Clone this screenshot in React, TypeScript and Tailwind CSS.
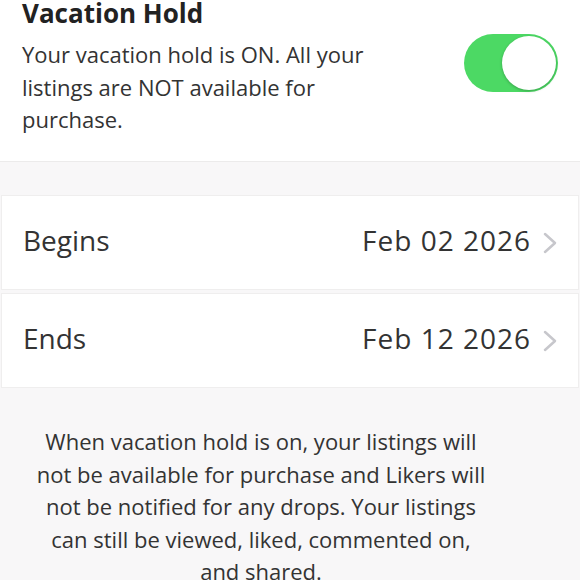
export default function App() {
  const font = { fontFamily: '"Open Sans", "Noto Sans", sans-serif' };
  return (
    <div className="w-[580px] h-[580px] overflow-hidden bg-[#f8f7f8] text-[#333333]" style={font}>
      <div className="bg-white border-b border-[#ecebeb] h-[162px] px-[22px] flex flex-col">
        <h1 className="text-[26px] leading-[32px] font-bold text-[#222222] -mt-[3px]">Vacation Hold</h1>
        <div className="flex justify-between items-start mt-[9px]">
          <p className="text-[22px] leading-[32.5px] w-[380px]">
            Your vacation hold is ON. All your listings are NOT available for purchase.
          </p>
          <div className="-mt-[4px] w-[94px] h-[58px] rounded-full bg-[#4cd964] p-[2px] flex justify-end">
            <div className="w-[54px] h-[54px] rounded-full bg-white shadow-[0_1px_3px_rgba(0,0,0,0.25)]" />
          </div>
        </div>
      </div>
      <div className="h-[33px]" />
      <div className="mx-[1px] flex flex-col gap-[3px]">
        <DateRow label="Begins" value="Feb 02 2026" />
        <DateRow label="Ends" value="Feb 12 2026" />
      </div>
      <p className="text-center text-[22px] leading-[32.5px] w-[462px] ml-[30px] mt-[37px]">
        When vacation hold is on, your listings will not be available for purchase and Likers will not be notified for any drops. Your listings can still be viewed, liked, commented on, and shared.
      </p>
    </div>
  );
}

function DateRow({ label, value }: { label: string; value: string }) {
  return (
    <div className="bg-white border border-[#efeeee] h-[95px] flex items-center pl-[21px] pr-[20px] pb-[6px]">
      <span className="text-[28px] flex-1">{label}</span>
      <span className="text-[28px] tracking-[1px]">{value}</span>
      <svg width="16" height="22" viewBox="0 0 16 22" className="ml-[11px] mt-[6px]">
        <path d="M3 2 L13 11 L3 20" fill="none" stroke="#c7c7cc" strokeWidth="2.5" strokeLinecap="round" strokeLinejoin="round" />
      </svg>
    </div>
  );
}
